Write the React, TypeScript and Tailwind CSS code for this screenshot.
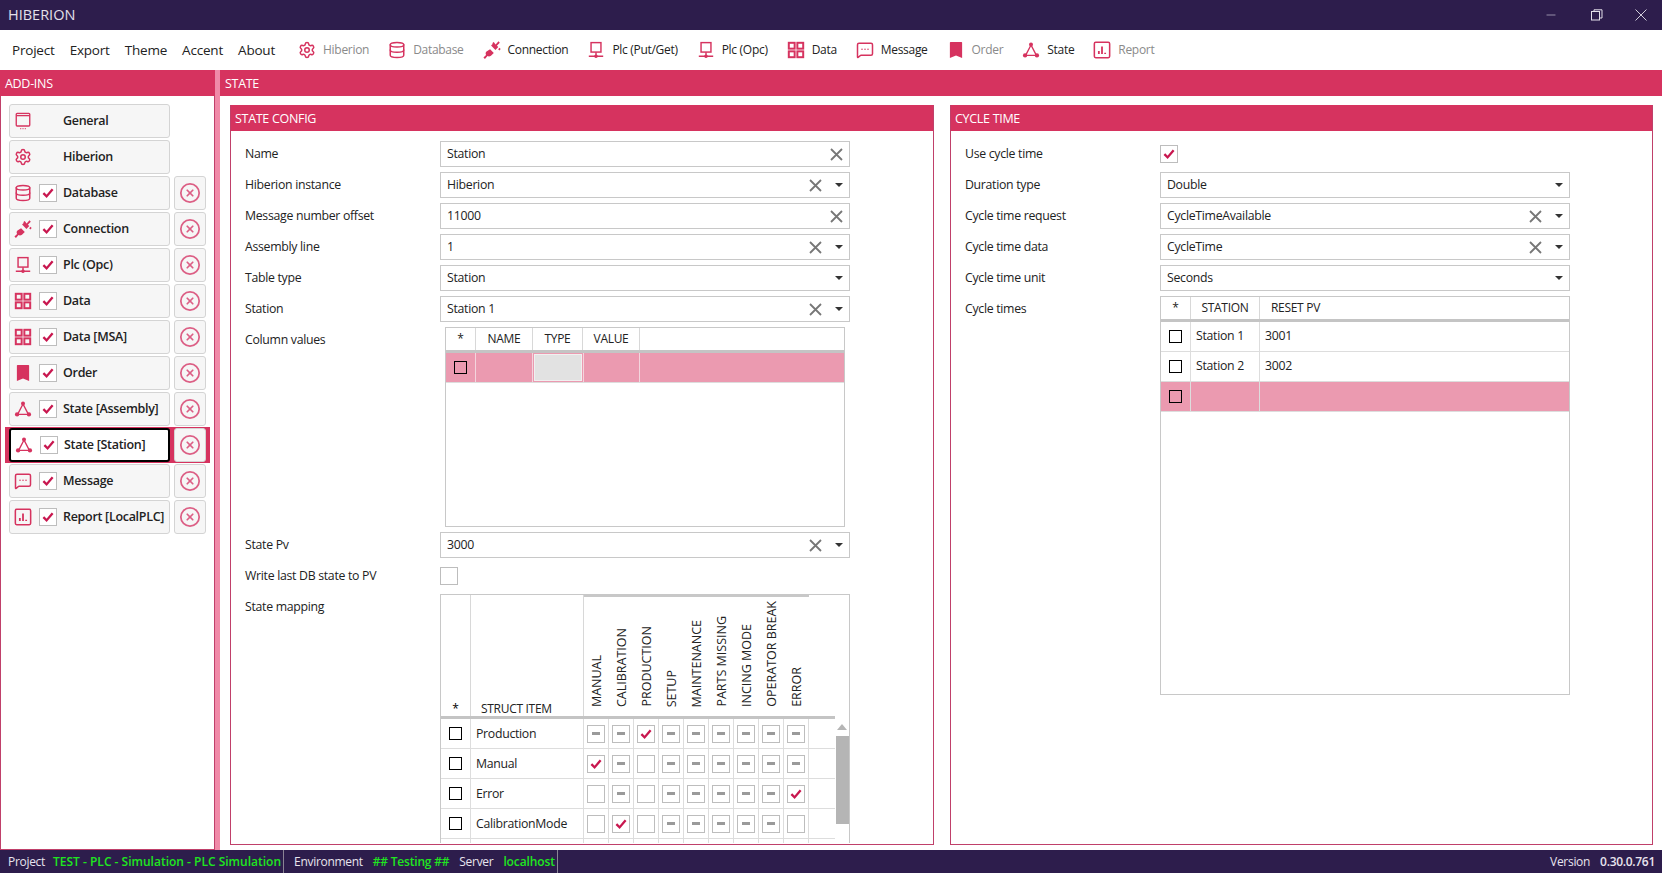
import React from 'react';
import { CircleX, Database, Settings, MessageSquareMore, Minus } from 'lucide-react';

const PINK = '#d6335f';

// --- icons ---
type IconProps = { className?: string };

const MonitorDots = ({ className }: IconProps) => (
  <svg viewBox="0 0 20 20" className={className} fill="none" stroke="currentColor" strokeWidth="1.5">
    <rect x="2.5" y="1.5" width="15" height="14" rx="1" />
    <path d="M2.5 4h15" />
    <path d="M7 18.5h1M9.5 18.5h1M12 18.5h1" />
  </svg>
);

const Plug = ({ className }: IconProps) => (
  <svg viewBox="1.5 1.5 16.5 16.5" className={className} fill="currentColor">
    <path d="M11.5 3.2l1.6 1.6 2.6-3 1.2 1.2-2.7 2.8 1.3 1.3-2.6 2.6-4-4z" />
    <path d="M8 9l3.4 3.4-2.6 2.6c-1 .9-2.3.9-3.2.3L3.3 18l-1.4-1.4 2.4-2.3c-.6-1-.5-2.3.4-3.1z" />
    <path d="M10 3.6l1.2-1.2 1.1 1.1-1.2 1.2zM15.4 9l1.2-1.2 1.1 1.1-1.2 1.2z" />
  </svg>
);

const PlcIcon = ({ className }: IconProps) => (
  <svg viewBox="0 0 20 20" className={className} fill="none" stroke="currentColor" strokeWidth="1.6">
    <rect x="4.5" y="1.8" width="11" height="10.5" />
    <path d="M10 12.5v4M2 17h16" />
    <circle cx="10" cy="17" r="1.2" fill="currentColor" />
  </svg>
);

const GridIcon = ({ className }: IconProps) => (
  <svg viewBox="0 0 20 20" className={className} fill="none" stroke="currentColor" strokeWidth="2.2">
    <rect x="2" y="2" width="6.5" height="6.5" />
    <rect x="11.5" y="2" width="6.5" height="6.5" />
    <rect x="2" y="11.5" width="6.5" height="6.5" />
    <rect x="11.5" y="11.5" width="6.5" height="6.5" />
  </svg>
);

const Bookmark = ({ className }: IconProps) => (
  <svg viewBox="0 0 20 20" className={className} fill="currentColor">
    <path d="M4 1h12a.8.8 0 0 1 .8.8V19L10 16 3.2 19V1.8A.8.8 0 0 1 4 1z" />
  </svg>
);

const StateIcon = ({ className }: IconProps) => (
  <svg viewBox="0 0 20 20" className={className} fill="none" stroke="currentColor" strokeWidth="1.5">
    <path d="M10 4.5L4 16h12z" />
    <circle cx="10" cy="4" r="2.2" fill="currentColor" stroke="none" />
    <circle cx="3.4" cy="16" r="2.4" fill="currentColor" stroke="none" />
    <circle cx="16.6" cy="16" r="2.4" fill="currentColor" stroke="none" />
  </svg>
);

const ReportIcon = ({ className }: IconProps) => (
  <svg viewBox="0 0 20 20" className={className} fill="none" stroke="currentColor" strokeWidth="1.7">
    <rect x="1.5" y="1.5" width="17" height="17" rx="1.5" />
    <path d="M6.5 14.5v-3.5M10 14.5V6M13.5 14.5v-1.5" strokeWidth="2" />
  </svg>
);

const ClearX = () => (
  <svg viewBox="0 0 13 13" className="h-[13px] w-[13px]" fill="none" stroke="#777" strokeWidth="1.8">
    <path d="M1 1l11 11M12 1L1 12" />
  </svg>
);

const Check = () => (
  <svg viewBox="0 0 18 18" className="h-[18px] w-[18px]" fill="none" stroke="#c8174f" strokeWidth="2.6">
    <path d="M3.8 9.2l3.6 3.6 6.8-8" />
  </svg>
);

const CheckBox = ({ checked }: { checked?: boolean }) => (
  <div className="flex h-[18px] w-[18px] shrink-0 items-center justify-center border border-[#bdbdbd] bg-white">
    {checked && <Check />}
  </div>
);

const RowBox = () => <div className="-mt-px h-[13px] w-[13px] border border-black" />;

// --- top bars ---
const toolbarItems = [
  { label: 'Hiberion', Icon: Settings, off: true },
  { label: 'Database', Icon: Database, off: true },
  { label: 'Connection', Icon: Plug },
  { label: 'Plc (Put/Get)', Icon: PlcIcon },
  { label: 'Plc (Opc)', Icon: PlcIcon },
  { label: 'Data', Icon: GridIcon },
  { label: 'Message', Icon: MessageSquareMore },
  { label: 'Order', Icon: Bookmark, off: true },
  { label: 'State', Icon: StateIcon },
  { label: 'Report', Icon: ReportIcon, off: true },
];

function TitleBar() {
  return (
    <div className="flex h-[30px] items-center justify-between bg-[#2d1d4c] pl-2 text-[#e4e0ea]">
      <span className="text-[14.5px] tracking-[0px]">HIBERION</span>
      <div className="flex items-center">
        <div className="flex w-[46px] justify-center"><Minus size={14} strokeWidth={1} /></div>
        <div className="flex w-[46px] justify-center">
          <svg viewBox="0 0 12 12" className="h-[12px] w-[12px]" fill="none" stroke="currentColor">
            <rect x="0.5" y="2.5" width="8" height="8.5" />
            <path d="M3 2.5V.8h8v8.2H8.5" />
          </svg>
        </div>
        <div className="flex w-[42px] justify-center">
          <svg viewBox="0 0 12 12" className="h-[12px] w-[12px]" fill="none" stroke="currentColor" strokeWidth="0.9">
            <path d="M.5.5l11 11M11.5.5l-11 11" />
          </svg>
        </div>
      </div>
    </div>
  );
}

function MenuBar() {
  return (
    <div className="flex h-[40px] items-center bg-white pl-3 text-[#222]">
      <div className="flex gap-[15px] text-[13.5px] tracking-[-0.2px]">
        {['Project', 'Export', 'Theme', 'Accent', 'About'].map((m) => <span key={m}>{m}</span>)}
      </div>
      <div className="ml-[23px] flex items-center gap-[19px] text-[12px]">
        {toolbarItems.map(({ label, Icon, off }) => (
          <div key={label} className="flex items-center gap-[7px]">
            <Icon className="h-[18px] w-[18px] text-[#d6335f]" />
            <span className={off ? 'text-[#8a8a8a]' : 'text-[#222]'}>{label}</span>
          </div>
        ))}
      </div>
    </div>
  );
}

// --- left panel ---
const addIns = [
  { label: 'General', Icon: MonitorDots, fixed: true },
  { label: 'Hiberion', Icon: Settings, fixed: true },
  { label: 'Database', Icon: Database },
  { label: 'Connection', Icon: Plug },
  { label: 'Plc (Opc)', Icon: PlcIcon },
  { label: 'Data', Icon: GridIcon },
  { label: 'Data [MSA]', Icon: GridIcon },
  { label: 'Order', Icon: Bookmark },
  { label: 'State [Assembly]', Icon: StateIcon },
  { label: 'State [Station]', Icon: StateIcon, active: true },
  { label: 'Message', Icon: MessageSquareMore },
  { label: 'Report [LocalPLC]', Icon: ReportIcon },
];

function AddInRow({ item }: { item: (typeof addIns)[number] }) {
  const { label, Icon, fixed, active } = item;
  return (
    <div className={`-mx-[4px] flex h-[36px] items-center gap-[4px] px-[4px] ${active ? 'bg-[#d6335f]' : ''}`}>
      <div
        className={`flex h-[34px] w-[161px] items-center rounded-[3px] pl-[4px] ${
          active ? 'border-2 border-black bg-white' : 'border border-[#d4d4d4] bg-[#f6f6f6]'
        }`}
      >
        <Icon className="h-[18px] w-[18px] shrink-0 text-[#d6335f]" />
        <div className="ml-[7px] flex h-[18px] w-[18px] shrink-0 items-center justify-center">
          {!fixed && <CheckBox checked />}
        </div>
        <span className="ml-[6px] whitespace-nowrap text-[12.5px] font-semibold text-[#222]">{label}</span>
      </div>
      {!fixed && (
        <div className="flex h-[34px] w-[32px] items-center justify-center rounded-[3px] border border-[#d4d4d4] bg-[#f6f6f6]">
          <CircleX size={22} strokeWidth={1.9} className="text-[#dc5f85]" />
        </div>
      )}
    </div>
  );
}

function LeftPanel() {
  return (
    <div className="flex w-[215px] shrink-0 flex-col">
      <div className="flex h-[26px] items-center bg-[#d6335f] pl-[5px] pt-[2px] text-[12.5px] text-white">ADD-INS</div>
      <div className="flex flex-1 flex-col border-x border-b border-[#c0406a] bg-white pl-[8px] pr-[8px] pt-[7px]">
        {addIns.map((a) => <AddInRow key={a.label} item={a} />)}
      </div>
    </div>
  );
}

// --- form bits ---
function Field({ value, clear, drop }: { value: string; clear?: boolean; drop?: boolean }) {
  return (
    <div className="flex h-[26px] w-[410px] items-center border border-[#c8c8c8] bg-white pl-[6px] pr-[6px] text-[#222]">
      <span className="flex-1">{value}</span>
      {clear && <div className={drop ? 'mr-[13px]' : ''}><ClearX /></div>}
      {drop && <div className="h-0 w-0 border-x-[4px] border-t-[4px] border-x-transparent border-t-[#333]" />}
    </div>
  );
}

function Row({ label, children }: { label: string; children: React.ReactNode }) {
  return (
    <div className="flex">
      <div className="flex h-[26px] w-[195px] shrink-0 items-center text-[#222]">{label}</div>
      {children}
    </div>
  );
}

function Panel({ title, children }: { title: string; children: React.ReactNode }) {
  return (
    <div className="flex min-h-0 flex-col border border-[#c0406a] border-t-0">
      <div className="flex h-[26px] shrink-0 items-center bg-[#d6335f] pl-[4px] pt-[2px] text-[12.5px] text-white">{title}</div>
      <div className="flex min-h-0 flex-1 flex-col gap-[5px] overflow-hidden pl-[14px] pt-[10px]">{children}</div>
    </div>
  );
}

function GridHead({ children, className }: { children?: React.ReactNode; className: string }) {
  return (
    <div className={`flex h-full shrink-0 items-center justify-center text-[12px] text-[#222] ${className}`}>
      {children}
    </div>
  );
}

function ColumnValues() {
  return (
    <div className="ml-[5px] flex h-[200px] w-[400px] flex-col border border-[#c8c8c8]">
      <div className="flex h-[25px] shrink-0 items-center border-b-[3px] border-[#c4c4c4]">
        <GridHead className="w-[30px] border-r border-[#d8d8d8]">*</GridHead>
        <GridHead className="w-[57px] border-r border-[#d8d8d8]">NAME</GridHead>
        <GridHead className="w-[50px] border-r border-[#d8d8d8]">TYPE</GridHead>
        <GridHead className="w-[57px] border-r border-[#d8d8d8]">VALUE</GridHead>
      </div>
      <div className="flex h-[30px] items-stretch border-b border-[#ddd] bg-[#eb9ab0]">
        <div className="flex w-[30px] items-center justify-center border-r border-[#f3d5dd]"><RowBox /></div>
        <div className="w-[57px] border-r border-[#f3d5dd]" />
        <div className="m-px w-[48px] border border-[#f0f0f0] bg-[#e2e2e2]" />
        <div className="w-[57px] border-x border-[#f3d5dd]" />
      </div>
    </div>
  );
}

type Cell = 'check' | 'none' | 'dash';
const c: Cell = 'check';
const n: Cell = 'none';
const d: Cell = 'dash';

const mappingCols = ['MANUAL', 'CALIBRATION', 'PRODUCTION', 'SETUP', 'MAINTENANCE', 'PARTS MISSING', 'INCING MODE', 'OPERATOR BREAK', 'ERROR'];
const mappingRows: { name: string; cells: Cell[] }[] = [
  { name: 'Production', cells: [d, d, c, d, d, d, d, d, d] },
  { name: 'Manual', cells: [c, d, n, d, d, d, d, d, d] },
  { name: 'Error', cells: [n, d, n, d, d, d, d, d, c] },
  { name: 'CalibrationMode', cells: [n, c, n, d, d, d, d, d, n] },
];

function TriBox({ value }: { value: Cell }) {
  return (
    <div className="flex h-[18px] w-[18px] items-center justify-center border border-[#bdbdbd] bg-white">
      {value === 'check' && <Check />}
      {value === 'dash' && <div className="h-[3px] w-[8px] bg-[#9a9a9a]" />}
    </div>
  );
}

function StateMapping() {
  return (
    <div className="relative flex h-[249px] w-[410px] flex-col overflow-hidden border-x border-t border-[#c8c8c8]">
      <div className="flex h-[124px] w-[394px] shrink-0 border-b-[3px] border-[#c4c4c4]">
        <div className="flex w-[30px] shrink-0 items-end justify-center border-r border-[#d8d8d8] text-[12px] leading-[15px]">*</div>
        <div className="flex w-[113px] shrink-0 items-end border-r border-[#d8d8d8] pl-[10px] text-[12px] leading-[14px] text-[#222]">STRUCT ITEM</div>
        <div className="flex border-t-2 border-[#c8c8c8]">
          {mappingCols.map((h) => (
            <div key={h} className="flex w-[25px] items-end justify-center pb-[9px] pl-[2px]">
              <span className="rotate-180 whitespace-nowrap text-[12.5px] tracking-[0px] text-[#222] [writing-mode:vertical-rl]">{h}</span>
            </div>
          ))}
        </div>
      </div>
      {mappingRows.map((r) => (
        <div key={r.name} className="flex h-[30px] w-[394px] shrink-0 border-b border-[#ddd]">
          <div className="flex w-[30px] shrink-0 items-center justify-center border-r border-[#ddd]"><RowBox /></div>
          <div className="flex w-[113px] shrink-0 items-center border-r border-[#ddd] pl-[5px] pt-[2px] text-[#222]">{r.name}</div>
          {r.cells.map((v, i) => (
            <div key={i} className="flex w-[25px] items-center justify-center border-r border-[#ddd]">
              <TriBox value={v} />
            </div>
          ))}
        </div>
      ))}
      <div className="flex h-[10px] w-[394px] shrink-0">
        <div className="w-[30px] border-r border-[#ddd]" />
        <div className="w-[113px] border-r border-[#ddd]" />
        {mappingCols.map((h) => <div key={h} className="w-[25px] border-r border-[#ddd]" />)}
      </div>
      {/* scrollbar sits over the right edge of the rows */}
      <div className="absolute right-0 top-[124px] flex h-[125px] w-[14px] flex-col items-center">
        <div className="mt-[5px] h-0 w-0 border-x-[5px] border-b-[6px] border-x-transparent border-b-[#b5b5b5]" />
        <div className="mt-[6px] h-[88px] w-[13px] bg-[#b5b5b5]" />
      </div>
    </div>
  );
}

function StateConfig() {
  return (
    <Panel title="STATE CONFIG">
      <Row label="Name"><Field value="Station" clear /></Row>
      <Row label="Hiberion instance"><Field value="Hiberion" clear drop /></Row>
      <Row label="Message number offset"><Field value="11000" clear /></Row>
      <Row label="Assembly line"><Field value="1" clear drop /></Row>
      <Row label="Table type"><Field value="Station" drop /></Row>
      <Row label="Station"><Field value="Station 1" clear drop /></Row>
      <Row label="Column values"><ColumnValues /></Row>
      <Row label="State Pv"><Field value="3000" clear drop /></Row>
      <Row label="Write last DB state to PV">
        <div className="flex h-[26px] items-center"><CheckBox /></div>
      </Row>
      <Row label="State mapping"><StateMapping /></Row>
    </Panel>
  );
}

function CycleTimes() {
  const rows = [['Station 1', '3001'], ['Station 2', '3002'], ['', '']];
  return (
    <div className="flex h-[399px] w-[410px] flex-col border border-[#c8c8c8]">
      <div className="flex h-[25px] shrink-0 items-center border-b-[3px] border-[#c4c4c4]">
        <GridHead className="w-[30px] border-r border-[#d8d8d8]">*</GridHead>
        <GridHead className="w-[69px] border-r border-[#d8d8d8]">STATION</GridHead>
        <GridHead className="pl-[11px]">RESET PV</GridHead>
      </div>
      {rows.map(([st, pv], i) => (
        <div key={i} className={`flex h-[30px] shrink-0 border-b border-[#ddd] text-[#222] ${st ? '' : 'bg-[#eb9ab0]'}`}>
          <div className="flex w-[30px] items-center justify-center border-r border-[#ddd]"><RowBox /></div>
          <div className="flex w-[69px] items-center border-r border-[#ddd] pl-[5px]">{st}</div>
          <div className="flex items-center pl-[5px]">{pv}</div>
        </div>
      ))}
    </div>
  );
}

function CycleTime() {
  return (
    <Panel title="CYCLE TIME">
      <Row label="Use cycle time">
        <div className="flex h-[26px] items-center"><CheckBox checked /></div>
      </Row>
      <Row label="Duration type"><Field value="Double" drop /></Row>
      <Row label="Cycle time request"><Field value="CycleTimeAvailable" clear drop /></Row>
      <Row label="Cycle time data"><Field value="CycleTime" clear drop /></Row>
      <Row label="Cycle time unit"><Field value="Seconds" drop /></Row>
      <Row label="Cycle times"><CycleTimes /></Row>
    </Panel>
  );
}

function StatusBar() {
  return (
    <div className="flex h-[23px] shrink-0 items-center bg-[#2d1d4c] text-[12px] text-[#e8e4ee]">
      <div className="flex h-full items-center gap-[8px] border-r border-[#8a8494] pl-[8px] pr-[2px]">
        <span>Project</span>
        <span className="font-semibold tracking-[0px] text-[#1fe61f]">TEST - PLC - Simulation - PLC Simulation</span>
      </div>
      <div className="flex h-full items-center border-r border-[#8a8494] pl-[10px] pr-[2px]">
        <span>Environment</span>
        <span className="ml-[10px] font-semibold tracking-[-0.2px] text-[#1fe61f]">## Testing ##</span>
        <span className="ml-[10px]">Server</span>
        <span className="ml-[10px] font-semibold tracking-[-0.1px] text-[#1fe61f]">localhost</span>
      </div>
      <div className="ml-auto flex items-center gap-[10px] pr-[7px]">
        <span>Version</span>
        <span className="font-semibold">0.30.0.761</span>
      </div>
    </div>
  );
}

export default function App() {
  return (
    <div className="flex h-screen flex-col overflow-hidden bg-white text-[12.3px] tracking-[-0.3px] [font-family:'Open_Sans','Noto_Sans',sans-serif]">
      <TitleBar />
      <MenuBar />
      <div className="flex min-h-0 flex-1">
        <LeftPanel />
        <div className="w-[5px] shrink-0 bg-[#f08aa8]" />
        <div className="flex min-w-0 flex-1 flex-col">
          <div className="flex h-[26px] shrink-0 items-center pl-[5px] pt-[2px] text-[12.5px] text-white" style={{ backgroundColor: PINK }}>STATE</div>
          <div className="grid min-h-0 flex-1 grid-cols-[704px_703px] gap-[16px] pb-[5px] pl-[10px] pt-[9px]">
            <StateConfig />
            <CycleTime />
          </div>
        </div>
      </div>
      <StatusBar />
    </div>
  );
}
